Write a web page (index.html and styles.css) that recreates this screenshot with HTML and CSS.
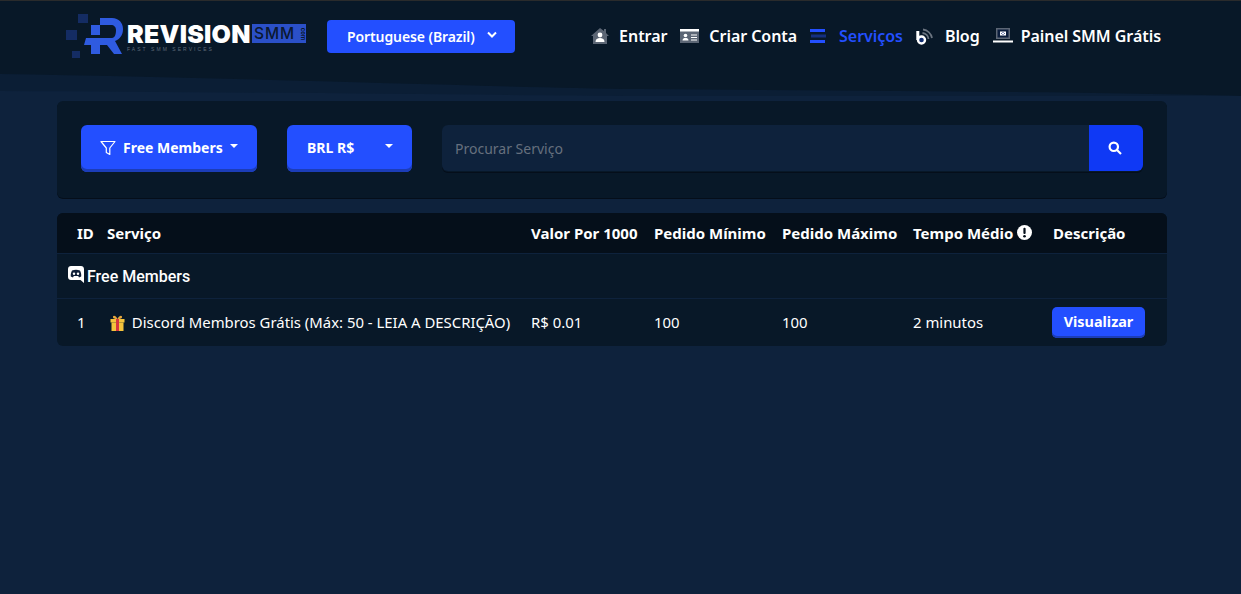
FILE: index.html
```html
<!DOCTYPE html>
<html lang="pt-BR">
<head>
<meta charset="utf-8">
<title>Revision SMM - Serviços</title>
<link rel="stylesheet" href="styles.css">
</head>
<body>
<header class="topbar">
  <svg class="wave" viewBox="0 0 1241 24" preserveAspectRatio="none" aria-hidden="true">
    <path class="wave-a" d="M0 2C250 6 480 15 640 17C900 19 1100 20 1241 24H0Z"/>
    <path class="wave-b" d="M0 19C250 20 480 23 640 24H0Z"/>
  </svg>
  <div class="topbar-row">
    <a class="logo" href="#">
      <svg class="logo-mark" viewBox="0 0 60 46" aria-hidden="true">
        <rect class="sq-dim" x="12" y="1" width="10" height="9"/>
        <rect class="sq-dim" x="0" y="17" width="11" height="10"/>
        <rect class="sq-dim" x="6" y="38" width="8" height="7"/>
        <rect class="sq-blue" x="25" y="12" width="9" height="10"/>
        <rect class="sq-blue" x="25" y="32" width="9" height="9"/>
        <path class="sq-blue" d="M34 5H46C53 5 57 10 57 16C57 22 54 26 49 28L56 41H48L41 32H18L20 25H46C49 25 50 21 50 17C50 14 48 12 45 12H34Z"/>
      </svg>
      <span class="logo-words">
        <span class="logo-main"><span class="logo-rev">REVISION</span><span class="logo-smm">SMM<span class="logo-com">com</span></span></span>
        <span class="logo-tag">FAST SMM SERVICES</span>
      </span>
    </a>
    <button class="lang-btn" type="button">Portuguese (Brazil)
      <svg class="lang-chev" viewBox="0 0 10 7" aria-hidden="true"><path d="M1 1.500L5 5.500L9 1.500"/></svg>
    </button>
    <nav class="nav">
      <a class="nav-link" href="#">
        <svg class="nav-ico ico-house" viewBox="0 0 18 16" aria-hidden="true"><path class="i-grey" d="M9 0L13 3V1H15V5L18 8H16V16H2V8H0Z"/><circle class="i-white" cx="9" cy="7" r="2.400"/><path class="i-white" d="M4.500 14C4.500 11 6.500 10 9 10S13.500 11 13.500 14Z"/></svg>
        Entrar</a>
      <a class="nav-link" href="#">
        <svg class="nav-ico ico-card" viewBox="0 0 19 14" aria-hidden="true"><rect class="i-grey" y="0" width="19" height="14"/><rect class="i-white" y="0" width="19" height="2.500"/><circle class="i-white" cx="5.500" cy="6.500" r="1.800"/><path class="i-white" d="M2.500 11.500C2.500 9.500 4 9 5.500 9S8.500 9.500 8.500 11.500Z"/><path class="i-lines" d="M11 6H17M11 8.500H17M11 11H17"/></svg>
        Criar Conta</a>
      <a class="nav-link nav-active" href="#">
        <svg class="nav-ico ico-serv" viewBox="0 0 16 14" aria-hidden="true"><rect class="i-blue" x="0" y="0" width="15" height="3"/><rect class="i-navy" x="1" y="5.500" width="15" height="3"/><rect class="i-blue" x="0" y="11" width="15" height="3"/></svg>
        Serviços</a>
      <a class="nav-link" href="#">
        <svg class="nav-ico ico-blog" viewBox="0 0 17 17" aria-hidden="true"><path class="i-arc" d="M6.500 5A6.500 6.500 0 0 1 12.500 11M7 1.500A10.500 10.500 0 0 1 16 10"/><path class="i-stem" d="M1.800 3V12"/><circle class="i-ring" cx="5.500" cy="12" r="3.500"/></svg>
        Blog</a>
      <a class="nav-link" href="#">
        <svg class="nav-ico ico-lap" viewBox="0 0 20 16" aria-hidden="true"><rect class="i-grey" x="3" y="0" width="14" height="11"/><rect class="i-navy2" x="4.500" y="1.500" width="11" height="8"/><rect class="i-white" x="7" y="3.500" width="6" height="4"/><path class="i-code" d="M9.500 4.500L8.500 5.500L9.500 6.500M10.500 4.500L11.500 5.500L10.500 6.500"/><rect class="i-white" x="0" y="12.500" width="20" height="2"/></svg>
        Painel SMM Grátis</a>
    </nav>
  </div>
</header>

<main class="page">
  <section class="filters">
    <button class="drop-btn drop-cat" type="button">
      <svg class="funnel" viewBox="0 0 16 16" aria-hidden="true"><path d="M1 1.500H15L9.800 8V14.500L6.300 12.500V8Z"/></svg>
      <span>Free Members</span><i class="caret"></i>
    </button>
    <button class="drop-btn drop-cur" type="button">
      <span>BRL R$</span><i class="caret"></i>
    </button>
    <form class="search">
      <input class="search-input" type="text" placeholder="Procurar Serviço">
      <button class="search-btn" type="button" aria-label="Procurar">
        <svg viewBox="0 0 14 14" aria-hidden="true"><circle cx="5.800" cy="5.800" r="4.200"/><path d="M9 9L13 13"/></svg>
      </button>
    </form>
  </section>

  <section class="card">
    <table class="services">
      <thead>
        <tr>
          <th class="c-id">ID</th>
          <th class="c-name">Serviço</th>
          <th class="c-price">Valor Por 1000</th>
          <th class="c-min">Pedido Mínimo</th>
          <th class="c-max">Pedido Máximo</th>
          <th class="c-time">Tempo Médio
            <svg class="info" viewBox="0 0 16 16" aria-hidden="true"><circle cx="8" cy="8" r="8"/><rect class="info-mark" x="6.800" y="3" width="2.400" height="6.500" rx="1"/><circle class="info-mark" cx="8" cy="12" r="1.400"/></svg>
          </th>
          <th class="c-desc">Descrição</th>
        </tr>
      </thead>
      <tbody>
        <tr class="group-row">
          <td colspan="7">
            <div class="group">
              <svg class="discord" viewBox="0 0 16 17" aria-hidden="true"><path class="d-body" d="M3 0H13C14.700 0 16 1.300 16 3V17L12.500 14H3C1.300 14 0 12.700 0 11V3C0 1.300 1.300 0 3 0Z"/><path class="d-face" d="M4 4.500C6.500 3.500 9.500 3.500 12 4.500C13 6.500 13.500 8.500 13.200 10.500L11 11.500L10.200 10H5.800L5 11.500L2.800 10.500C2.500 8.500 3 6.500 4 4.500Z"/><circle class="d-body" cx="6" cy="7.800" r="1.200"/><circle class="d-body" cx="10" cy="7.800" r="1.200"/></svg>
              <span>Free Members</span>
            </div>
          </td>
        </tr>
        <tr class="svc-row">
          <td class="c-id">1</td>
          <td class="c-name">
            <svg class="gift" viewBox="0 0 15 16" aria-hidden="true"><path class="g-bow" d="M7.500 4C5 4 2.500 3.500 3 1.500C3.500 0 6 0.500 7.500 4C9 0.500 11.500 0 12 1.500C12.500 3.500 10 4 7.500 4Z"/><rect class="g-yellow" x="0.500" y="4" width="14" height="3.500"/><rect class="g-yellow" x="1.500" y="7.500" width="12" height="8.500"/><rect class="g-red" x="6" y="4" width="3" height="12"/></svg>
            Discord Membros Grátis (Máx: 50 - LEIA A DESCRIÇÃO)
          </td>
          <td>R$ 0.01</td>
          <td>100</td>
          <td>100</td>
          <td>2 minutos</td>
          <td><button class="view-btn" type="button">Visualizar</button></td>
        </tr>
      </tbody>
    </table>
  </section>
</main>
</body>
</html>
```
FILE: styles.css
```css
* { box-sizing: border-box; }
html, body { margin: 0; }
body {
  min-height: 594px;
  background: #0e223c;
  color: #fff;
  font-family: "Noto Sans", "Open Sans", sans-serif;
  font-size: 15px;
  overflow: hidden;
}
button { font-family: inherit; border: 0; cursor: pointer; }
a { color: inherit; text-decoration: none; }

/* top bar */
.topbar {
  position: relative;
  height: 96px;
  background: #081828;
  border-top: 1px solid #2a2b2c;
}
.wave {
  position: absolute;
  left: 0;
  bottom: 0;
  width: 100%;
  height: 24px;
  display: block;
}
.wave-a { fill: #0b1e35; }
.wave-b { fill: #0e223c; }
.topbar-row {
  position: relative;
  display: flex;
  align-items: center;
  height: 70px;
  padding: 0 80px 0 66px;
}
.logo {
  display: flex;
  align-items: center;
  width: 261px;
  flex: none;
}
.logo-mark { width: 60px; height: 46px; flex: none; }
.sq-dim { fill: #142c63; }
.sq-blue { fill: #2f5be0; }
.logo-words {
  display: flex;
  flex-direction: column;
  margin-left: 1px;
  margin-top: 3px;
  width: 179px;
}
.logo-main { display: flex; align-items: center; height: 20px; }
.logo-rev {
  font-family: "Inter", "Liberation Sans", sans-serif;
  font-weight: 900;
  font-size: 25px;
  line-height: 20px;
  letter-spacing: 0.25px;
  width: 125px;
  flex: none;
  white-space: nowrap;
}
.logo-smm {
  display: flex;
  align-items: center;
  justify-content: space-between;
  width: 54px;
  height: 19px;
  background: #2b50c8;
  color: #0a1830;
  font-family: "Inter", "Liberation Sans", sans-serif;
  font-weight: 500;
  font-size: 15.5px;
  line-height: 19px;
  letter-spacing: 0.9px;
  padding-left: 2px;
}
.logo-com {
  font-size: 6px;
  line-height: 6px;
  letter-spacing: 0;
  transform: rotate(90deg);
  width: 6px;
  display: flex;
  justify-content: center;
  font-weight: 700;
}
.logo-tag {
  font-family: "Liberation Sans", sans-serif;
  font-size: 5px;
  line-height: 5px;
  letter-spacing: 2.050px;
  margin-top: 3px;
  color: #5f6a7a;
  white-space: nowrap;
}
.lang-btn {
  display: flex;
  align-items: center;
  justify-content: space-between;
  flex: none;
  width: 188px;
  height: 33px;
  padding: 0 18px 0 20px;
  border-radius: 4px;
  background: #234fff;
  color: #fff;
  font-size: 14px;
  font-weight: 600;
  letter-spacing: -0.1px;
}
.lang-chev { width: 10px; height: 7px; margin-bottom: 3px; }
.lang-chev path { fill: none; stroke: #fff; stroke-width: 2; }
.nav {
  display: flex;
  align-items: center;
  margin-left: auto;
  gap: 13px;
}
.nav-link {
  display: flex;
  align-items: center;
  gap: 10px;
  font-size: 16px;
  font-weight: 600;
  letter-spacing: -0.05px;
  white-space: nowrap;
}
.nav-ico { height: 16px; flex: none; }
.ico-house { width: 18px; }
.ico-card { width: 19px; height: 14px; }
.ico-serv { width: 16px; height: 14px; margin-right: 3px; }
.ico-blog { width: 17px; height: 17px; margin-right: 2px; }
.ico-lap { width: 20px; margin-right: -2px; }
.nav-active { color: #234fff; }
.i-grey { fill: #5c6675; }
.i-white { fill: #fff; }
.i-blue { fill: #234fff; }
.i-navy { fill: #15307f; }
.i-navy2 { fill: #0a1c3c; }
.i-lines { stroke: #fff; stroke-width: 1; fill: none; }
.i-arc { stroke: #6b7480; stroke-width: 1.800; fill: none; }
.i-stem { stroke: #fff; stroke-width: 3; fill: none; }
.i-ring { stroke: #fff; stroke-width: 2.400; fill: #0f2c70; }
.i-code { stroke: #15307f; stroke-width: 0.900; fill: none; }

/* content */
.page {
  display: flex;
  flex-direction: column;
  gap: 15px;
  width: 1110px;
  margin: 5px 0 0 57px;
}
.filters {
  display: flex;
  gap: 30px;
  height: 97px;
  padding: 24px;
  background: #081828;
  border-radius: 6px;
  box-shadow: 0 1px 0 #050e1a;
}
.drop-btn {
  display: flex;
  align-items: center;
  height: 47px;
  border-radius: 6px;
  background: #234fff;
  box-shadow: inset 0 -3px 0 #1c3db8;
  color: #fff;
  font-size: 14px;
  font-weight: 700;
  padding: 0 0 2px;
  flex: none;
}
.drop-cat { width: 176px; padding-left: 19px; }
.drop-cur { width: 125px; padding-left: 20px; }
.funnel { width: 16px; height: 16px; margin-right: 7px; }
.funnel path { fill: none; stroke: #fff; stroke-width: 1.200; stroke-linejoin: round; }
.caret {
  width: 0;
  height: 0;
  border: 4px solid transparent;
  border-top-color: #fff;
  border-bottom-width: 0;
  margin-bottom: 3px;
}
.drop-cat .caret { margin-left: 7px; }
.drop-cur .caret { margin-left: 31px; }
.search {
  display: flex;
  flex: 1;
  height: 47px;
  border-radius: 6px;
  box-shadow: 0 1px 0 #050e1a;
}
.search-input {
  flex: 1;
  min-width: 0;
  height: 46px;
  padding: 1px 13px 0;
  border: 0;
  outline: 0;
  background: #0e223c;
  border-radius: 6px 0 0 6px;
  color: #fff;
  font-family: inherit;
  font-size: 14px;
}
.search-input::placeholder { color: #66707e; opacity: 1; }
.search-btn {
  display: flex;
  align-items: center;
  justify-content: center;
  width: 54px;
  height: 46px;
  padding: 0 2px 0 0;
  background: #0f39f5;
  border-radius: 0 6px 6px 0;
}
.search-btn svg { width: 14px; height: 14px; }
.search-btn circle, .search-btn path { fill: none; stroke: #fff; stroke-width: 2.200; }

/* table */
.card {
  background: #081828;
  border-radius: 6px;
  overflow: hidden;
}
.services {
  width: 100%;
  table-layout: fixed;
  border-collapse: separate;
  border-spacing: 0;
}
.services th {
  height: 41px;
  padding: 0;
  text-align: left;
  background: #050f1a;
  border-bottom: 1px solid #0e223c;
  font-size: 15px;
  font-weight: 700;
  white-space: nowrap;
}
.services td { padding: 0; font-size: 14.9px; }
.c-id { width: 50px; padding-left: 20px !important; }
.c-name { width: 424px; white-space: nowrap; }
.c-price { width: 123px; }
.c-min { width: 128px; }
.c-max { width: 131px; }
.c-time { width: 140px; }
.c-desc { width: 114px; }
.info { width: 15px; height: 15px; vertical-align: -1px; }
.info circle:first-child { fill: #fff; }
.info-mark { fill: #050f1a; }
.group-row td { height: 45px; border-bottom: 1px solid #0e223c; }
.group {
  display: flex;
  align-items: center;
  gap: 3px;
  padding-left: 11px;
  font-family: "Roboto", sans-serif;
  font-size: 16px;
  font-weight: 500;
}
.discord { width: 16px; height: 17px; margin-bottom: 4px; }
.d-body { fill: #fff; }
.d-face { fill: #0f1f38; }
.svc-row td { height: 47px; padding-bottom: 1px; }
.gift { width: 15px; height: 16px; vertical-align: -3px; margin: 0 3px 0 3px; }
.g-bow { fill: #e9a73c; }
.g-yellow { fill: #f5c33c; }
.g-red { fill: #d8343f; }
.view-btn {
  display: block;
  width: 93px;
  height: 31px;
  margin: 0 0 0 -1px;
  border-radius: 5px;
  background: #234fff;
  box-shadow: inset 0 -2px 0 #1c3db8;
  color: #fff;
  font-size: 14.4px;
  font-weight: 700;
  padding: 0 0 2px;
}
```
